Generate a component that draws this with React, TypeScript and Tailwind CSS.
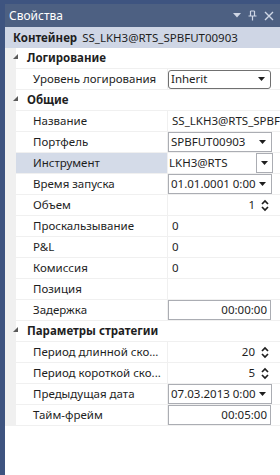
import React from "react";

type Row =
  | { cat: string }
  | {
      label: string;
      kind: "text" | "combo" | "round" | "edit" | "spin" | "box" | "none";
      value?: string;
      selected?: boolean;
    };

const rows: Row[] = [
  { cat: "Логирование" },
  { label: "Уровень логирования", kind: "round", value: "Inherit" },
  { cat: "Общие" },
  { label: "Название", kind: "text", value: "SS_LKH3@RTS_SPBFUT00903" },
  { label: "Портфель", kind: "combo", value: "SPBFUT00903" },
  { label: "Инструмент", kind: "edit", value: "LKH3@RTS", selected: true },
  { label: "Время запуска", kind: "combo", value: "01.01.0001 0:00" },
  { label: "Объем", kind: "spin", value: "1" },
  { label: "Проскальзывание", kind: "text", value: "0" },
  { label: "P&L", kind: "text", value: "0" },
  { label: "Комиссия", kind: "text", value: "0" },
  { label: "Позиция", kind: "none" },
  { label: "Задержка", kind: "box", value: "00:00:00" },
  { cat: "Параметры стратегии" },
  { label: "Период длинной ско...", kind: "spin", value: "20" },
  { label: "Период короткой ско...", kind: "spin", value: "5" },
  { label: "Предыдущая дата", kind: "combo", value: "07.03.2013 0:00" },
  { label: "Тайм-фрейм", kind: "box", value: "00:05:00" },
];

function Arrow() {
  return (
    <svg width="7" height="4" viewBox="0 0 7 4" className="shrink-0">
      <polygon points="0,0 7,0 3.5,4" fill="#1e1e1e" />
    </svg>
  );
}

function Spin() {
  return (
    <svg width="8" height="13" viewBox="0 0 8 13" className="shrink-0">
      <path d="M1 5 L4 2 L7 5" stroke="#1e1e1e" strokeWidth="1.7" fill="none" />
      <path d="M1 8 L4 11 L7 8" stroke="#1e1e1e" strokeWidth="1.7" fill="none" />
    </svg>
  );
}

function Value({ row }: { row: Extract<Row, { label: string }> }) {
  switch (row.kind) {
    case "round":
      return (
        <div className="flex h-[19px] w-[103px] items-center justify-between rounded-[3px] border border-[#707070] bg-white pl-[2px] pr-[5px]">
          <span>{row.value}</span>
          <Arrow />
        </div>
      );
    case "combo":
      return (
        <div className="flex h-[20px] w-[104px] items-center justify-between border border-[#abadb3] bg-white pl-[2px] pr-[5px]">
          <span className="whitespace-nowrap">{row.value}</span>
          <Arrow />
        </div>
      );
    case "edit":
      return (
        <div className="flex h-[20px] w-[105px] items-center justify-between pl-[1px]">
          <span>{row.value}</span>
          <div className="flex h-[20px] w-[17px] items-center justify-center border border-[#abadb3] bg-white">
            <Arrow />
          </div>
        </div>
      );
    case "spin":
      return (
        <div className="flex w-[104px] items-center justify-end gap-[6px] pr-[3px]">
          <span>{row.value}</span>
          <Spin />
        </div>
      );
    case "box":
      return (
        <div className="flex h-[20px] w-[103px] items-center justify-end border border-[#abadb3] bg-white pr-[3px]">
          <span>{row.value}</span>
        </div>
      );
    case "text":
      return <span className="whitespace-nowrap pl-[4px]">{row.value}</span>;
    default:
      return null;
  }
}

export default function App() {
  return (
    <div className="flex h-[475px] w-[280px] flex-col overflow-hidden bg-[#3e5480] pl-[5px] pt-[4px] font-['Noto_Sans','Open_Sans',sans-serif] text-[11.5px] text-[#1e1e1e]">
      <div className="flex h-[23px] shrink-0 items-center justify-between bg-[#4d6082] pl-[4px] pr-[6px] text-[12px] text-white">
        <span>Свойства</span>
        <div className="flex items-center gap-[7px]">
          <svg width="8" height="5" viewBox="0 0 8 5">
            <polygon points="0,0 8,0 4,4.5" fill="#cfd6e5" />
          </svg>
          <svg width="9" height="11" viewBox="0 0 9 11">
            <path d="M2.5 1 V6 M6.5 1 V6 M2.5 1 H6.5 M0.5 6 H8.5 M4.5 6 V10.5" stroke="#cfd6e5" strokeWidth="1.2" fill="none" />
          </svg>
          <svg width="10" height="10" viewBox="0 0 10 10">
            <path d="M1 1 L9 9 M9 1 L1 9" stroke="#cfd6e5" strokeWidth="1.4" />
          </svg>
        </div>
      </div>
      <div className="flex h-[21px] shrink-0 items-center whitespace-nowrap bg-[#cfd6e5] pl-[8px]">
        <span className="font-bold">Контейнер</span>
        <span className="ml-[5px]">SS_LKH3@RTS_SPBFUT00903</span>
      </div>
      <div className="flex flex-1">
        <div className="flex-1 bg-white">
          <div className="border-l-[11px] border-[#f0f0f0]">
            {rows.map((row, i) =>
              "cat" in row ? (
                <div key={i} className="flex h-[21px] items-center border-b border-[#f0f0f0] bg-white">
                  <svg width="5" height="5" viewBox="0 0 5 5" className="-ml-[3px] mb-[3px]">
                    <polygon points="5,0 5,5 0,5" fill="#595959" />
                  </svg>
                  <span className="ml-[9px] font-bold">{row.cat}</span>
                </div>
              ) : (
                <div key={i} className="flex h-[21px] border-b border-[#f0f0f0]">
                  <div
                    className={`flex w-[151px] shrink-0 items-center whitespace-nowrap pl-[17px] ${
                      row.selected ? "bg-[#d4dbe8]" : ""
                    }`}
                  >
                    {row.label}
                  </div>
                  <div className="flex flex-1 items-center overflow-hidden border-l border-[#f0f0f0]">
                    <Value row={row} />
                  </div>
                </div>
              )
            )}
          </div>
        </div>
        <div className="w-[6px] bg-[#3e5480]" />
      </div>
    </div>
  );
}
